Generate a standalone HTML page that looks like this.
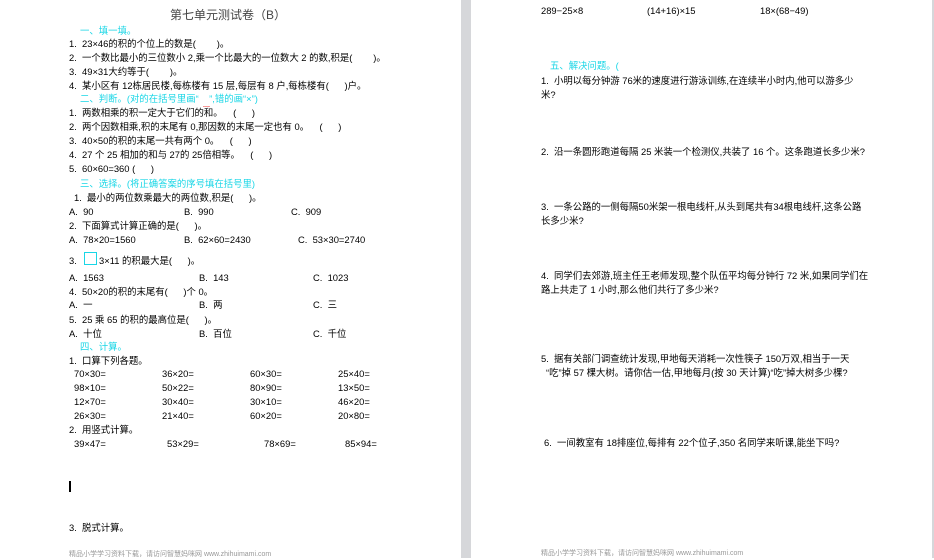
<!DOCTYPE html>
<html><head><meta charset="utf-8"><style>
body{margin:0;width:934px;height:558px;background:#fff;position:relative;overflow:hidden;font-family:"Liberation Sans","Noto Sans CJK SC",sans-serif;font-size:9.4px;color:#000}
.t{position:absolute;white-space:nowrap;line-height:10px}
.c{color:#19d6e6}
.f{color:#999;font-size:7px}
</style></head><body>
<div style="position:absolute;left:461px;top:0;width:10px;height:558px;background:#d6d7da"></div>
<div style="position:absolute;left:932px;top:0;width:2px;height:558px;background:#d6d7da"></div>
<div class="t" style="left:170px;top:8px;font-size:12px;line-height:14px;color:#444">第七单元测试卷（B）</div>
<div class="t c" style="left:80px;top:26px">一、填一填。</div>
<div class="t" style="left:69px;top:39px">1.&nbsp; 23×46的积的个位上的数是(&nbsp;&nbsp;&nbsp;&nbsp;&nbsp;&nbsp;&nbsp;&nbsp;)。</div>
<div class="t" style="left:69px;top:53px">2.&nbsp; 一个数比最小的三位数小 2,乘一个比最大的一位数大 2 的数,积是(&nbsp;&nbsp;&nbsp;&nbsp;&nbsp;&nbsp;&nbsp;&nbsp;)。</div>
<div class="t" style="left:69px;top:67px">3.&nbsp; 49×31大约等于(&nbsp;&nbsp;&nbsp;&nbsp;&nbsp;&nbsp;&nbsp;&nbsp;)。</div>
<div class="t" style="left:69px;top:81px">4.&nbsp; 某小区有 12栋居民楼,每栋楼有 15 层,每层有 8 户,每栋楼有(&nbsp;&nbsp;&nbsp;&nbsp;&nbsp;&nbsp;)户。</div>
<div class="t c" style="left:80px;top:94px">二、判断。(对的在括号里画“&nbsp;&nbsp;&nbsp;&nbsp;”,错的画“×”)</div>
<div class="t" style="left:203px;top:100px;color:#e00;font-size:7px">﹏</div>
<div class="t" style="left:69px;top:108px">1.&nbsp; 两数相乘的积一定大于它们的和。&nbsp;&nbsp;&nbsp;&nbsp;(&nbsp;&nbsp;&nbsp;&nbsp;&nbsp;&nbsp;)</div>
<div class="t" style="left:69px;top:122px">2.&nbsp; 两个因数相乘,积的末尾有 0,那因数的末尾一定也有 0。&nbsp;&nbsp;&nbsp;&nbsp;(&nbsp;&nbsp;&nbsp;&nbsp;&nbsp;&nbsp;)</div>
<div class="t" style="left:69px;top:136px">3.&nbsp; 40×50的积的末尾一共有两个 0。&nbsp;&nbsp;&nbsp;&nbsp;(&nbsp;&nbsp;&nbsp;&nbsp;&nbsp;&nbsp;)</div>
<div class="t" style="left:69px;top:150px">4.&nbsp; 27 个 25 相加的和与 27的 25倍相等。&nbsp;&nbsp;&nbsp;&nbsp;(&nbsp;&nbsp;&nbsp;&nbsp;&nbsp;&nbsp;)</div>
<div class="t" style="left:69px;top:164px">5.&nbsp; 60×60=360 (&nbsp;&nbsp;&nbsp;&nbsp;&nbsp;&nbsp;)</div>
<div class="t c" style="left:80px;top:179px">三、选择。(将正确答案的序号填在括号里)</div>
<div class="t" style="left:74px;top:193px">1.&nbsp; 最小的两位数乘最大的两位数,积是(&nbsp;&nbsp;&nbsp;&nbsp;&nbsp;&nbsp;)。</div>
<div class="t" style="left:69px;top:207px">A.&nbsp; 90</div><div class="t" style="left:184px;top:207px">B.&nbsp; 990</div><div class="t" style="left:291px;top:207px">C.&nbsp; 909</div>
<div class="t" style="left:69px;top:221px">2.&nbsp; 下面算式计算正确的是(&nbsp;&nbsp;&nbsp;&nbsp;&nbsp;&nbsp;)。</div>
<div class="t" style="left:69px;top:235px">A.&nbsp; 78×20=1560</div><div class="t" style="left:184px;top:235px">B.&nbsp; 62×60=2430</div><div class="t" style="left:298px;top:235px">C.&nbsp; 53×30=2740</div>
<div class="t" style="left:69px;top:256px">3.</div>
<div style="position:absolute;left:84px;top:252px;width:11px;height:11px;border:1px solid #19d6e6"></div>
<div class="t" style="left:99px;top:256px">3×11 的积最大是(&nbsp;&nbsp;&nbsp;&nbsp;&nbsp;&nbsp;)。</div>
<div class="t" style="left:69px;top:273px">A.&nbsp; 1563</div><div class="t" style="left:199px;top:273px">B.&nbsp; 143</div><div class="t" style="left:313px;top:273px">C.&nbsp; 1023</div>
<div class="t" style="left:69px;top:287px">4.&nbsp; 50×20的积的末尾有(&nbsp;&nbsp;&nbsp;&nbsp;&nbsp;&nbsp;)个 0。</div>
<div class="t" style="left:69px;top:300px">A.&nbsp; 一</div><div class="t" style="left:199px;top:300px">B.&nbsp; 两</div><div class="t" style="left:313px;top:300px">C.&nbsp; 三</div>
<div class="t" style="left:69px;top:315px">5.&nbsp; 25 乘 65 的积的最高位是(&nbsp;&nbsp;&nbsp;&nbsp;&nbsp;&nbsp;)。</div>
<div class="t" style="left:69px;top:329px">A.&nbsp; 十位</div><div class="t" style="left:199px;top:329px">B.&nbsp; 百位</div><div class="t" style="left:313px;top:329px">C.&nbsp; 千位</div>
<div class="t c" style="left:80px;top:342px">四、计算。</div>
<div class="t" style="left:69px;top:356px">1.&nbsp; 口算下列各题。</div>
<div class="t" style="left:74px;top:369px">70×30=</div><div class="t" style="left:162px;top:369px">36×20=</div><div class="t" style="left:250px;top:369px">60×30=</div><div class="t" style="left:338px;top:369px">25×40=</div>
<div class="t" style="left:74px;top:383px">98×10=</div><div class="t" style="left:162px;top:383px">50×22=</div><div class="t" style="left:250px;top:383px">80×90=</div><div class="t" style="left:338px;top:383px">13×50=</div>
<div class="t" style="left:74px;top:397px">12×70=</div><div class="t" style="left:162px;top:397px">30×40=</div><div class="t" style="left:250px;top:397px">30×10=</div><div class="t" style="left:338px;top:397px">46×20=</div>
<div class="t" style="left:74px;top:411px">26×30=</div><div class="t" style="left:162px;top:411px">21×40=</div><div class="t" style="left:250px;top:411px">60×20=</div><div class="t" style="left:338px;top:411px">20×80=</div>
<div class="t" style="left:69px;top:425px">2.&nbsp; 用竖式计算。</div>
<div class="t" style="left:74px;top:439px">39×47=</div><div class="t" style="left:167px;top:439px">53×29=</div><div class="t" style="left:264px;top:439px">78×69=</div><div class="t" style="left:345px;top:439px">85×94=</div>
<div style="position:absolute;left:69px;top:481px;width:2px;height:11px;background:#000"></div>
<div class="t" style="left:69px;top:523px">3.&nbsp; 脱式计算。</div>
<div class="t f" style="left:69px;top:550px">精品小学学习资料下载，请访问智慧妈咪网 www.zhihuimami.com</div>

<div class="t" style="left:541px;top:6px">289−25×8</div><div class="t" style="left:647px;top:6px">(14+16)×15</div><div class="t" style="left:760px;top:6px">18×(68−49)</div>
<div class="t c" style="left:550px;top:61px">五、解决问题。(</div>
<div class="t" style="left:541px;top:76px">1.&nbsp; 小明以每分钟游 76米的速度进行游泳训练,在连续半小时内,他可以游多少</div>
<div class="t" style="left:541px;top:90px">米?</div>
<div class="t" style="left:541px;top:147px">2.&nbsp; 沿一条圆形跑道每隔 25 米装一个检测仪,共装了 16 个。这条跑道长多少米?</div>
<div class="t" style="left:541px;top:202px">3.&nbsp; 一条公路的一侧每隔50米架一根电线杆,从头到尾共有34根电线杆,这条公路</div>
<div class="t" style="left:541px;top:216px">长多少米?</div>
<div class="t" style="left:541px;top:271px">4.&nbsp; 同学们去郊游,班主任王老师发现,整个队伍平均每分钟行 72 米,如果同学们在</div>
<div class="t" style="left:541px;top:285px">路上共走了 1 小时,那么他们共行了多少米?</div>
<div class="t" style="left:541px;top:354px">5.&nbsp; 据有关部门调查统计发现,甲地每天消耗一次性筷子 150万双,相当于一天</div>
<div class="t" style="left:546px;top:368px">“吃”掉 57 棵大树。请你估一估,甲地每月(按 30 天计算)“吃”掉大树多少棵?</div>
<div class="t" style="left:544px;top:438px">6.&nbsp; 一间教室有 18排座位,每排有 22个位子,350 名同学来听课,能坐下吗?</div>
<div class="t f" style="left:541px;top:549px">精品小学学习资料下载，请访问智慧妈咪网 www.zhihuimami.com</div>
</body></html>
